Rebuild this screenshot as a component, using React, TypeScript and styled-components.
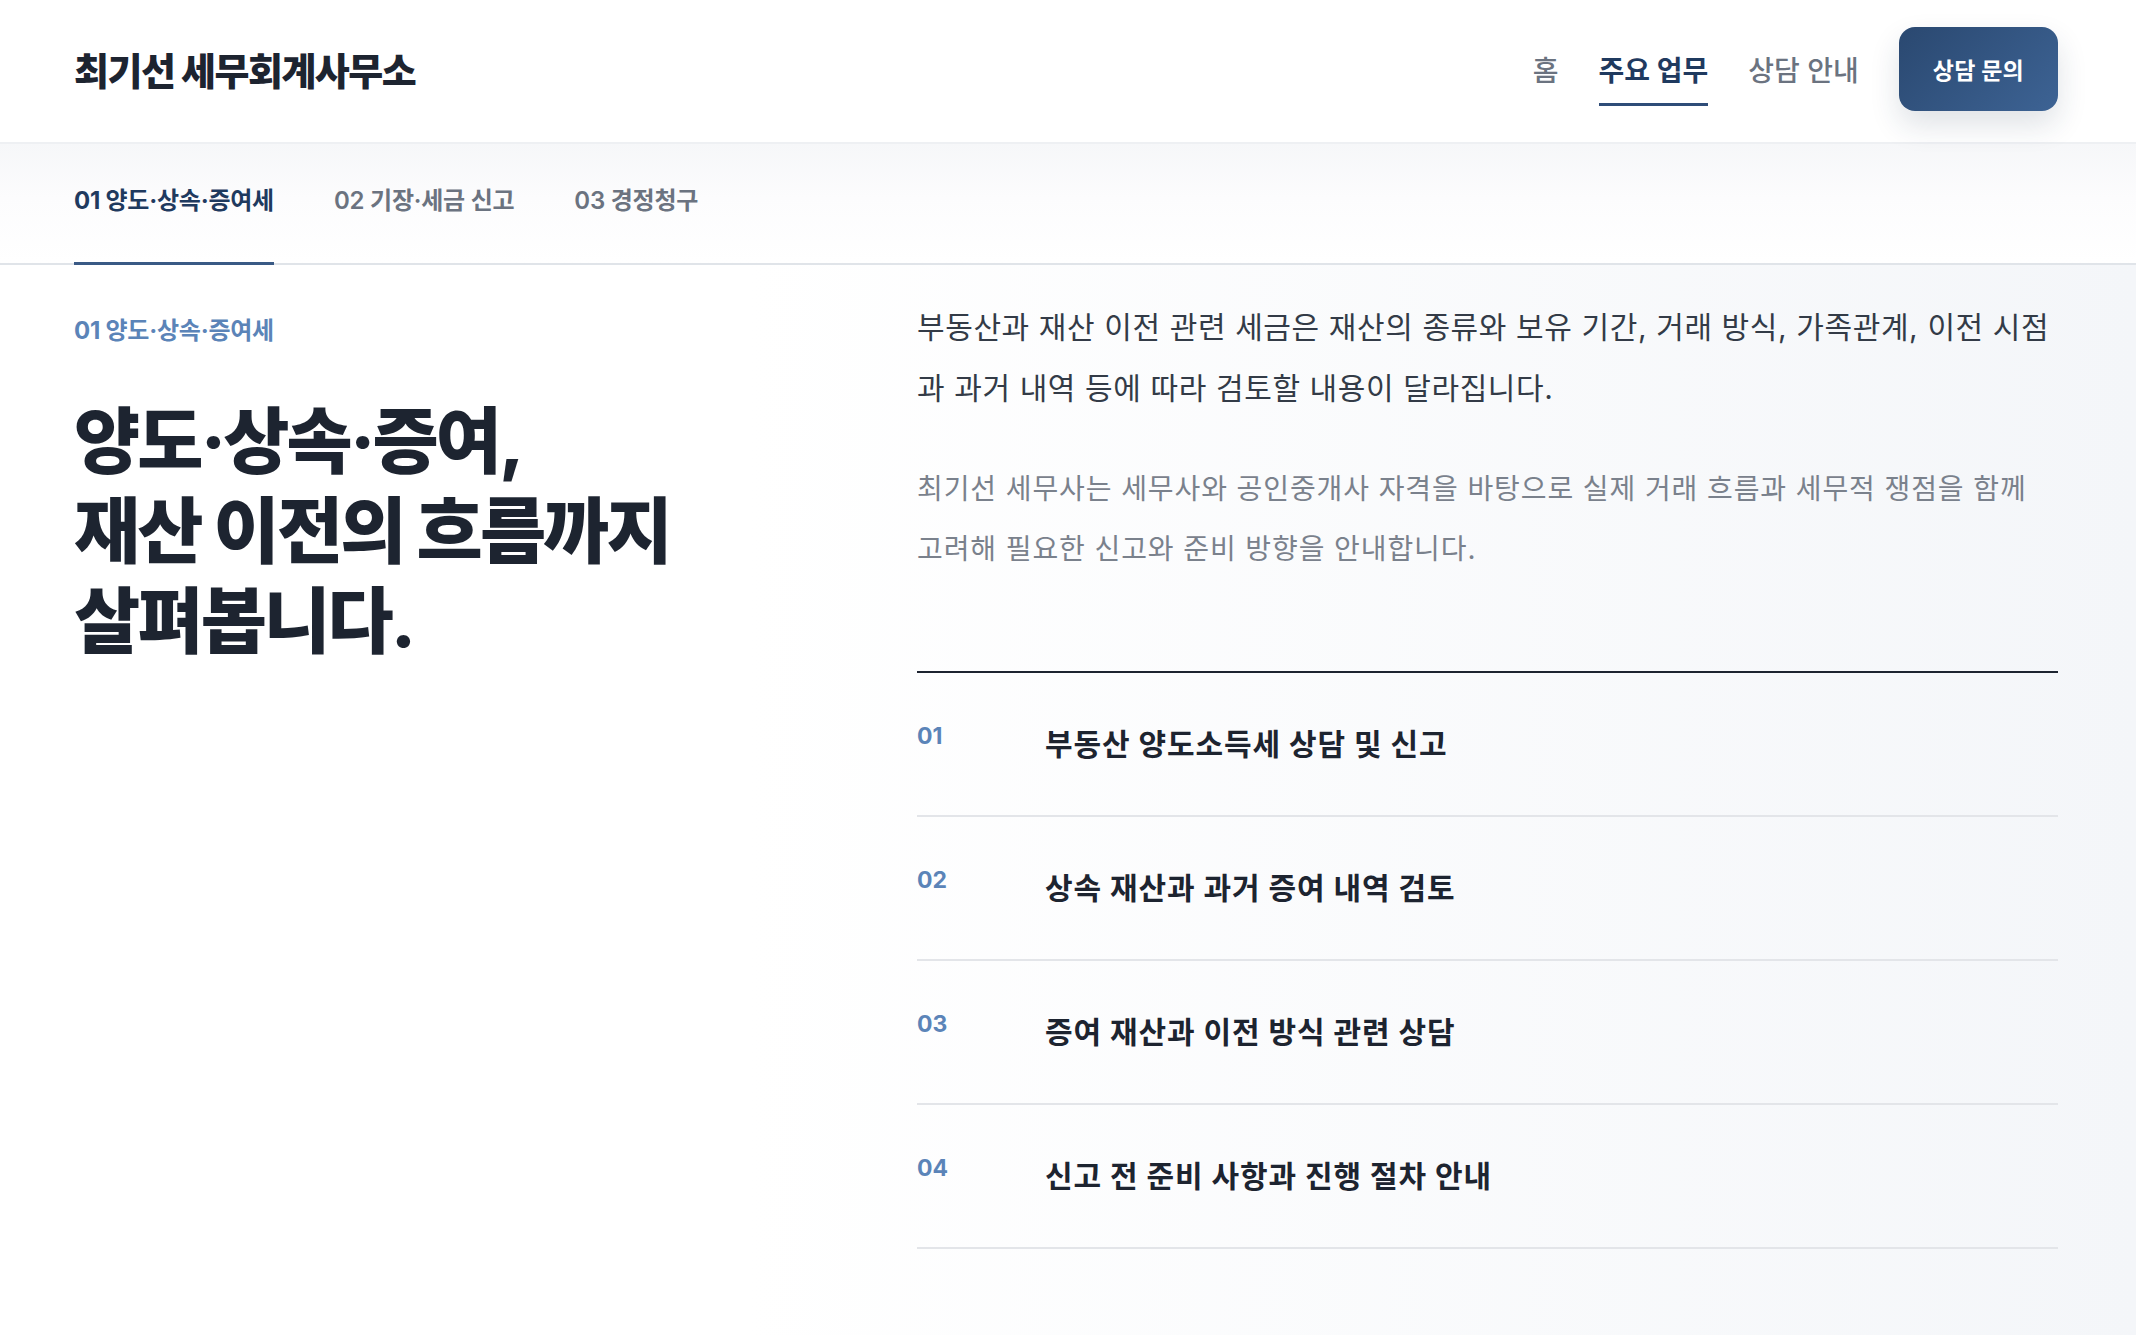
import { useState } from "react";
import { createGlobalStyle, styled } from "styled-components";

const GlobalStyle = createGlobalStyle`
  * { box-sizing: border-box; }
  html, body { margin: 0; padding: 0; }
  body {
    font-family: Inter, "Noto Sans CJK KR", sans-serif;
    color: #1d2430;
    background: #ffffff;
  }
`;

const navItems = ["홈", "주요 업무", "상담 안내"];
const tabs = ["01 양도·상속·증여세", "02 기장·세금 신고", "03 경정청구"];
const services = [
  "부동산 양도소득세 상담 및 신고",
  "상속 재산과 과거 증여 내역 검토",
  "증여 재산과 이전 방식 관련 상담",
  "신고 전 준비 사항과 진행 절차 안내",
];

const App = () => {
  const [activeTab, setActiveTab] = useState(0);

  return (
    <Page>
      <GlobalStyle />
      <Header>
        <Logo>최기선 세무회계사무소</Logo>
        <Nav>
          {navItems.map((item, i) => (
            <NavLink key={item} $active={i === 1}>
              {item}
            </NavLink>
          ))}
          <ContactButton>상담 문의</ContactButton>
        </Nav>
      </Header>

      <TabBar>
        {tabs.map((tab, i) => (
          <Tab key={tab} $active={i === activeTab} onClick={() => setActiveTab(i)}>
            {tab}
          </Tab>
        ))}
      </TabBar>

      <Content>
        <Intro>
          <Eyebrow>{tabs[activeTab]}</Eyebrow>
          <Heading>
            양도·상속·증여,
            <br />
            재산 이전의 흐름까지
            <br />
            살펴봅니다.
          </Heading>
        </Intro>

        <Detail>
          <Lead>
            부동산과 재산 이전 관련 세금은 재산의 종류와 보유 기간, 거래 방식,
            가족관계, 이전 시점과 과거 내역 등에 따라 검토할 내용이 달라집니다.
          </Lead>
          <Note>
            최기선 세무사는 세무사와 공인중개사 자격을 바탕으로 실제 거래 흐름과
            세무적 쟁점을 함께 고려해 필요한 신고와 준비 방향을 안내합니다.
          </Note>

          <ServiceList>
            {services.map((title, i) => (
              <ServiceRow key={title}>
                <ServiceNo>{String(i + 1).padStart(2, "0")}</ServiceNo>
                <ServiceTitle>{title}</ServiceTitle>
              </ServiceRow>
            ))}
          </ServiceList>
        </Detail>
      </Content>
    </Page>
  );
};

export default App;

const Page = styled.div`
  min-height: 1335px;
  background: linear-gradient(90deg, #ffffff 0%, #ffffff 35%, #f4f6f9 100%);
`;

const Header = styled.header`
  height: 144px;
  padding: 0 78px 6px 74px;
  display: flex;
  align-items: center;
  justify-content: space-between;
  background: #ffffff;
  border-bottom: 2px solid #eef0f3;
`;

const Logo = styled.div`
  font-size: 38px;
  font-weight: 800;
  letter-spacing: -0.04em;
  color: #1d2430;
`;

const Nav = styled.nav`
  display: flex;
  align-items: center;
  gap: 40px;
  margin-top: 2px;
`;

const NavLink = styled.a<{ $active: boolean }>`
  position: relative;
  font-size: 28px;
  font-weight: ${(p) => (p.$active ? 700 : 500)};
  letter-spacing: 0;
  color: ${(p) => (p.$active ? "#1f3a5f" : "#6b7380")};
  cursor: pointer;

  &::after {
    content: "";
    display: ${(p) => (p.$active ? "block" : "none")};
    position: absolute;
    left: 0;
    right: 0;
    bottom: -17px;
    height: 3px;
    background: #2f4d78;
  }
`;

const ContactButton = styled.button`
  height: 84px;
  padding: 0 34px;
  border: none;
  border-radius: 16px;
  background: linear-gradient(135deg, #2a4870 0%, #3d6394 100%);
  box-shadow: 0 14px 30px rgba(30, 50, 80, 0.14);
  color: #ffffff;
  font-family: inherit;
  font-size: 23px;
  font-weight: 700;
  letter-spacing: 0.01em;
  cursor: pointer;
`;

const TabBar = styled.div`
  height: 121px;
  padding: 0 74px;
  display: flex;
  align-items: stretch;
  gap: 60px;
  background: linear-gradient(180deg, #f6f7f9 0%, #fcfcfd 45%, #ffffff 100%);
  border-bottom: 2px solid #e0e4e9;
`;

const Tab = styled.div<{ $active: boolean }>`
  display: flex;
  align-items: center;
  padding-bottom: 9px;
  font-size: 24px;
  font-weight: ${(p) => (p.$active ? 700 : 600)};
  letter-spacing: -0.01em;
  color: ${(p) => (p.$active ? "#1f3a5f" : "#6b7380")};
  border-bottom: 3px solid ${(p) => (p.$active ? "#3a5a85" : "transparent")};
  margin-bottom: -2px;
  cursor: pointer;
`;

const Content = styled.main`
  display: grid;
  grid-template-columns: 843px 1141px;
  padding: 32px 0 0 74px;
`;

const Intro = styled.section`
  padding-top: 17px;
`;

const Eyebrow = styled.div`
  font-size: 24px;
  font-weight: 700;
  letter-spacing: -0.01em;
  line-height: 34px;
  color: #5b84b8;
`;

const Heading = styled.h1`
  margin: 48px 0 0;
  font-size: 72px;
  font-weight: 800;
  line-height: 90px;
  letter-spacing: -0.04em;
  color: #1d2430;
`;

const Detail = styled.section``;

const Lead = styled.p`
  margin: 0;
  font-size: 30px;
  font-weight: 400;
  line-height: 61px;
  letter-spacing: 0.6px;
  color: #333b47;
`;

const Note = styled.p`
  margin: 40px 0 0;
  max-width: 1125px;
  font-size: 28px;
  font-weight: 400;
  line-height: 60px;
  letter-spacing: 0.9px;
  color: #7a818c;
`;

const ServiceList = styled.ul`
  list-style: none;
  margin: 92px 0 0;
  padding: 0;
  border-top: 2px solid #1d2430;
`;

const ServiceRow = styled.li`
  height: 144px;
  display: grid;
  grid-template-columns: 128px 1fr;
  align-items: start;
  padding-top: 51px;
  border-bottom: 2px solid #e3e5e9;
`;

const ServiceNo = styled.span`
  font-family: Inter, sans-serif;
  font-size: 23px;
  font-weight: 700;
  line-height: 28px;
  color: #5b84b8;
  margin-top: -2px;
`;

const ServiceTitle = styled.span`
  font-size: 30px;
  font-weight: 700;
  line-height: 40px;
  letter-spacing: 0.03em;
  color: #1d2430;
`;
